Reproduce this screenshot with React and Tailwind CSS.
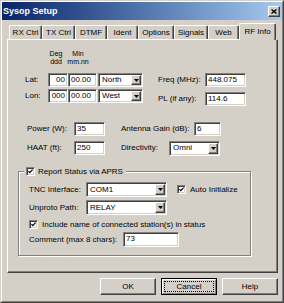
import React from 'react';

const sunken =
  'bg-white border border-t-[#808080] border-l-[#808080] border-r-white border-b-white shadow-[inset_1px_1px_0_#404040,inset_-1px_-1px_0_#d4d0c8]';
const raised =
  'bg-[#d4d0c8] border border-t-white border-l-white border-r-[#404040] border-b-[#404040] shadow-[inset_-1px_-1px_0_#808080]';

const Edit = ({ className, value, right }) => (
  <div className={`${sunken} ${className} flex items-center px-[2px] ${right ? 'justify-end' : ''}`}>
    {value}
  </div>
);

const Combo = ({ className, value }) => (
  <div className={`${sunken} ${className} flex items-stretch p-[1px]`}>
    <div className="flex-1 flex items-center pl-[2px]">{value}</div>
    <div className={`${raised} w-[10px] flex items-center justify-center`}>
      <svg width="5" height="3" viewBox="0 0 5 3">
        <path d="M0 0h5L2.5 3z" fill="#000" />
      </svg>
    </div>
  </div>
);

const Check = () => (
  <div className={`${sunken} w-[9px] h-[9px] flex items-center justify-center shrink-0`}>
    <svg width="5" height="5" viewBox="0 0 5 5">
      <path d="M0.4 2.1L1.8 3.6L4.6 0.6" stroke="#000" strokeWidth="1.3" fill="none" />
    </svg>
  </div>
);

const tabs = [
  { label: 'RX Ctrl', w: 'w-[33px]' },
  { label: 'TX Ctrl', w: 'w-[33px]' },
  { label: 'DTMF', w: 'w-[32px]' },
  { label: 'Ident', w: 'w-[31px]' },
  { label: 'Options', w: 'w-[36px]' },
  { label: 'Signals', w: 'w-[34px]' },
  { label: 'Web', w: 'w-[31px]' },
];

const Button = ({ children }) => (
  <div className={`${raised} w-[56px] h-[17px] flex items-center justify-center`}>{children}</div>
);

export default function App() {
  return (
    <div className="w-[284px] h-[303px] bg-[#d4d0c8] border border-t-[#d4d0c8] border-l-[#d4d0c8] border-r-[#404040] border-b-[#404040] font-['Liberation_Sans',Arial,sans-serif] text-[8px] leading-none text-black">
      <div className="h-full border border-t-white border-l-white border-r-[#808080] border-b-[#808080] flex flex-col">
        {/* title bar */}
        <div className="h-[18px] bg-linear-to-r from-[#0a246a] to-[#a6caf0] flex items-center justify-between pl-[1px] pr-[2px]">
          <span className="text-white font-bold text-[9px]">Sysop Setup</span>
          <div className={`${raised} w-[12px] h-[11px] flex items-center justify-center`}>
            <svg width="6" height="5" viewBox="0 0 6 5">
              <path d="M0.5 0.5L5.5 4.5M5.5 0.5L0.5 4.5" stroke="#000" strokeWidth="1.4" />
            </svg>
          </div>
        </div>

        {/* tabs */}
        <div className="mt-[3px] ml-[7px] h-[16px] flex items-end">
          {tabs.map((t) => (
            <div
              key={t.label}
              className={`${t.w} h-[14px] rounded-t-[2px] border-t border-l border-r border-t-white border-l-white border-r-[#404040] shadow-[inset_-1px_0_0_#808080] flex items-center justify-center`}
            >
              {t.label}
            </div>
          ))}
          <div className="relative z-10 w-[37px] h-[17px] -mb-[1px] rounded-t-[2px] bg-[#d4d0c8] border-t border-l border-r border-t-white border-l-white border-r-[#404040] shadow-[inset_-1px_0_0_#808080] flex justify-center pt-[4px]">
            RF Info
          </div>
        </div>

        {/* panel */}
        <div className="ml-[5px] w-[271px] h-[234px] border border-t-white border-l-white border-r-[#404040] border-b-[#404040] shadow-[inset_-1px_-1px_0_#808080] flex flex-col">
          {/* lat / lon + freq */}
          <div className="mt-[10px] ml-[17px] flex items-start">
            <div className="flex flex-col">
              <div className="flex h-[16px] text-[7px] leading-[8px]">
                <div className="w-[23px]" />
                <div className="w-[16px] flex flex-col items-center">
                  <span>Deg</span>
                  <span>ddd</span>
                </div>
                <div className="ml-[4px] w-[20px] flex flex-col items-center">
                  <span>Min</span>
                  <span>mm.nn</span>
                </div>
              </div>
              <div className="mt-[7px] h-[14px] flex items-center">
                <span className="w-[23px]">Lat:</span>
                <Edit className="w-[20px] h-[14px]" value="00" right />
                <Edit className="w-[29px] h-[14px]" value="00.00" />
                <Combo className="ml-[1px] w-[45px] h-[14px]" value="North" />
              </div>
              <div className="mt-[2px] h-[14px] flex items-center">
                <span className="w-[23px]">Lon:</span>
                <Edit className="w-[20px] h-[14px]" value="000" right />
                <Edit className="w-[29px] h-[14px]" value="00.00" />
                <Combo className="ml-[1px] w-[45px] h-[14px]" value="West" />
              </div>
            </div>
            <div className="ml-[15px] mt-[23px] flex flex-col gap-[5px]">
              <div className="h-[14px] flex items-center">
                <span className="w-[47px]">Freq (MHz):</span>
                <Edit className="w-[41px] h-[14px]" value="448.075" />
              </div>
              <div className="h-[14px] flex items-center">
                <span className="w-[47px]">PL (if any):</span>
                <Edit className="w-[41px] h-[14px]" value="114.6" />
              </div>
            </div>
          </div>

          {/* power / antenna */}
          <div className="mt-[16px] flex items-start">
            <div className="ml-[19px] flex flex-col gap-[5px]">
              <div className="h-[14px] flex items-center">
                <span className="w-[47px]">Power (W):</span>
                <Edit className="w-[31px] h-[14px]" value="35" />
              </div>
              <div className="h-[14px] flex items-center">
                <span className="w-[47px]">HAAT (ft):</span>
                <Edit className="w-[31px] h-[14px]" value="250" />
              </div>
            </div>
            <div className="ml-[16px] flex flex-col gap-[5px]">
              <div className="h-[14px] flex items-center">
                <span className="w-[73px]">Antenna Gain (dB):</span>
                <Edit className="w-[27px] h-[14px]" value="6" />
              </div>
              <div className="h-[14px] flex items-center">
                <span className="w-[48px]">Directivity:</span>
                <Combo className="w-[51px] h-[15px]" value="Omni" />
              </div>
            </div>
          </div>

          {/* APRS group */}
          <div className="mt-[16px] ml-[10px] relative w-[233px] h-[85px] border border-[#808080] shadow-[1px_1px_0_#fff,inset_1px_1px_0_#fff] pt-[10px] pl-[10px]">
            <div className="absolute left-[5px] -top-[5px] flex items-center bg-[#d4d0c8] pl-[2px] pr-[3px]">
              <Check />
              <span className="ml-[3px]">Report Status via APRS</span>
            </div>
            <div className="h-[15px] flex items-center">
              <span className="w-[57px]">TNC Interface:</span>
              <Combo className="w-[81px] h-[15px]" value="COM1" />
              <div className="ml-[10px]">
                <Check />
              </div>
              <span className="ml-[4px]">Auto Initialize</span>
            </div>
            <div className="mt-[3px] h-[15px] flex items-center">
              <span className="w-[57px]">Unproto Path:</span>
              <Combo className="w-[81px] h-[15px]" value="RELAY" />
            </div>
            <div className="mt-[5px] flex items-center">
              <Check />
              <span className="ml-[4px]">Include name of connected station(s) in status</span>
            </div>
            <div className="mt-[3px] h-[15px] flex items-center">
              <span className="w-[94px]">Comment (max 8 chars):</span>
              <Edit className="w-[56px] h-[15px] items-start pt-[2px]" value="73" />
            </div>
          </div>
        </div>

        {/* buttons */}
        <div className="mt-[5px] pr-[4px] flex justify-end gap-[5px]">
          <Button>OK</Button>
          <div className="w-[56px] h-[17px] border border-black">
            <div className="h-full border border-t-white border-l-white border-r-[#808080] border-b-[#808080] p-[1px]">
              <div className="h-full border border-dotted border-black flex items-center justify-center">
                Cancel
              </div>
            </div>
          </div>
          <Button>Help</Button>
        </div>
      </div>
    </div>
  );
}
